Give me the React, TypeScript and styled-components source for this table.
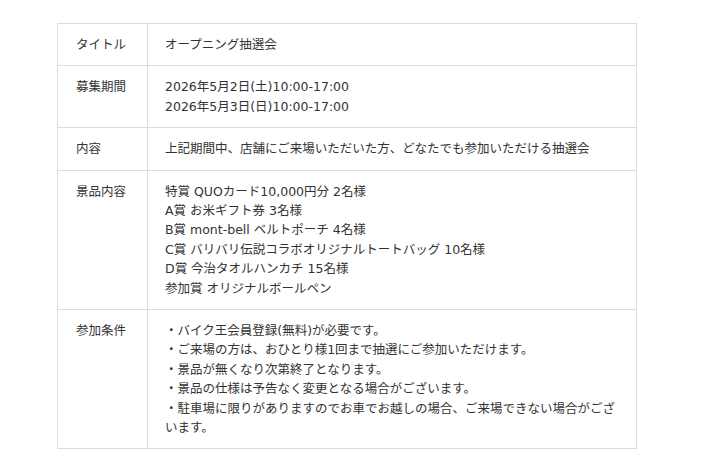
import { createGlobalStyle, styled } from 'styled-components';

const GlobalStyle = createGlobalStyle`
    html, body {
        margin: 0;
        padding: 0;
        background: #ffffff;
    }
    body {
        font-family: "DejaVu Sans", "Noto Sans CJK JP", sans-serif;
        color: #333333;
    }
`;

const Page = styled.div`
    padding: 23px 0 24px 57px;
`;

const InfoTable = styled.table`
    width: 580px;
    border-collapse: collapse;
    table-layout: fixed;
    font-size: 12.5px;
    line-height: 19.4px;
`;

const Label = styled.th`
    width: 90px;
    box-sizing: border-box;
    padding: 11px 10px 11px 18px;
    border: 1px solid #dcdcdc;
    text-align: left;
    vertical-align: top;
    font-weight: normal;
`;

const Value = styled.td`
    padding: 11px 17px;
    border: 1px solid #dcdcdc;
    text-align: left;
    vertical-align: top;
`;

const Lines = styled.ul`
    list-style: none;
    margin: 0;
    padding: 0;
`;

const Line = styled.li`
    margin: 0;
    height: 19.4px;
    &:last-child {
        height: auto;
    }
`;

const rows: { label: string; lines: string[] }[] = [
    { label: 'タイトル', lines: ['オープニング抽選会'] },
    { label: '募集期間', lines: ['2026年5月2日(土)10:00-17:00', '2026年5月3日(日)10:00-17:00'] },
    { label: '内容', lines: ['上記期間中、店舗にご来場いただいた方、どなたでも参加いただける抽選会'] },
    {
        label: '景品内容',
        lines: [
            '特賞 QUOカード10,000円分 2名様',
            'A賞 お米ギフト券 3名様',
            'B賞 mont-bell ベルトポーチ 4名様',
            'C賞 バリバリ伝説コラボオリジナルトートバッグ 10名様',
            'D賞 今治タオルハンカチ 15名様',
            '参加賞 オリジナルボールペン',
        ],
    },
    {
        label: '参加条件',
        lines: [
            '・バイク王会員登録(無料)が必要です。',
            '・ご来場の方は、おひとり様1回まで抽選にご参加いただけます。',
            '・景品が無くなり次第終了となります。',
            '・景品の仕様は予告なく変更となる場合がございます。',
            '・駐車場に限りがありますのでお車でお越しの場合、ご来場できない場合がございます。',
        ],
    },
];

export default function App() {
    return (
        <Page>
            <GlobalStyle />
            <InfoTable>
                <tbody>
                    {rows.map((row) => (
                        <tr key={row.label}>
                            <Label scope="row">{row.label}</Label>
                            <Value>
                                <Lines>
                                    {row.lines.map((line) => (
                                        <Line key={line}>{line}</Line>
                                    ))}
                                </Lines>
                            </Value>
                        </tr>
                    ))}
                </tbody>
            </InfoTable>
        </Page>
    );
}
